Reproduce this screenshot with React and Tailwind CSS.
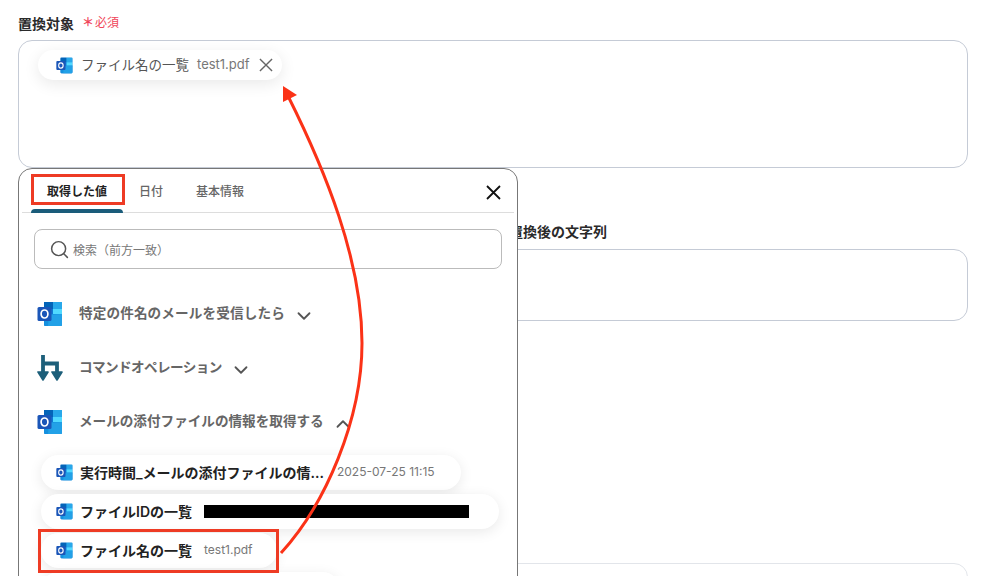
import React from "react";
import { ChevronDown, ChevronUp, Search } from "lucide-react";

const font = "font-['Inter','Noto_Sans_CJK_JP',sans-serif]";

const OutlookIcon = ({ className }) => (
  <svg viewBox="0 0 26 26" className={className}>
    <rect x="7" y="1" width="18" height="24" rx="1.5" fill="#0f78d4" />
    <rect x="7" y="1" width="9" height="7" fill="#0364b8" />
    <rect x="16" y="1" width="9" height="7" fill="#28a8ea" />
    <rect x="7" y="8" width="9" height="7" fill="#0f78d4" />
    <rect x="16" y="8" width="9" height="7" fill="#50d9ff" />
    <path d="M8 13 L25 13 L25 23.5 A1.5 1.5 0 0 1 23.5 25 L8.5 25 A1.5 1.5 0 0 1 7 23.5 L7 13 Z" fill="#1490df" />
    <path d="M12 14 L25 13 L25 23.5 A1.5 1.5 0 0 1 23.5 25 L11 25 Z" fill="#28a8ea" opacity="0.7" />
    <rect x="0.5" y="6" width="14" height="14" rx="1.5" fill="#1b56b8" />
    <ellipse cx="7.5" cy="13" rx="3.4" ry="4" fill="none" stroke="#ffffff" strokeWidth="1.7" />
  </svg>
);

const BranchIcon = ({ className }) => (
  <svg viewBox="0 0 26 26" className={className}>
    <path d="M6 0 V19 M6 8.5 H20 V19" fill="none" stroke="#1d5f7a" strokeWidth="3.8" />
    <path
      d="M1 17 H11 L6 25 Z M15 17 H25 L20 25 Z"
      fill="#1d5f7a"
      stroke="#1d5f7a"
      strokeWidth="1.6"
      strokeLinejoin="round"
    />
  </svg>
);

const CloseIcon = ({ className, strokeWidth }) => (
  <svg viewBox="0 0 15 15" className={className}>
    <path d="M1 1 L14 14 M14 1 L1 14" fill="none" stroke="currentColor" strokeWidth={strokeWidth} />
  </svg>
);

const Section = ({ icon, label, tracking = "", open }) => (
  <div className="flex h-[54px] items-center pl-[18px]">
    {icon}
    <span className={`ml-[16px] pb-[2px] text-[13.6px] font-semibold text-[#666666] ${tracking}`}>{label}</span>
    {open ? (
      <ChevronUp className="ml-[8px] mt-[3px] h-[22px] w-[22px] text-[#555555]" strokeWidth={2} />
    ) : (
      <ChevronDown className="ml-[8px] mt-[3px] h-[22px] w-[22px] text-[#555555]" strokeWidth={2} />
    )}
  </div>
);

const ValuePill = ({ label, width, children }) => (
  <div
    className={`flex ${width} h-[35px] items-center rounded-full bg-white pb-[1px] pl-[15px] shadow-[0_3px_14px_rgba(0,0,0,0.09)]`}
  >
    <OutlookIcon className="h-[17px] w-[17px] shrink-0" />
    <span className="ml-[7px] shrink-0 text-[14px] font-semibold text-[#222222]">{label}</span>
    {children}
  </div>
);

export default function App() {
  return (
    <div className={`relative h-[576px] w-[982px] overflow-hidden bg-white ${font}`}>
      {/* form behind the popup */}
      <div className="flex flex-col pl-[18px] pt-[14px]">
        <div className="flex h-[18px] items-center text-[14px] font-semibold text-[#2a2a2a]">
          置換対象
          <span className="ml-[8px] flex items-center text-[12px] font-normal text-[#f0465a]">
            <span className="font-bold">＊</span>
            <span className="ml-[1px]">必須</span>
          </span>
        </div>
        <div className="mt-[8px] h-[128px] w-[950px] rounded-[14px] border border-[#c5cbd6] pl-[19px] pt-[9px]">
          <div className="flex h-[30px] w-[244px] items-center rounded-full bg-white pl-[18px] shadow-[0_4px_16px_rgba(0,0,0,0.09)]">
            <OutlookIcon className="h-[17px] w-[17px] shrink-0" />
            <span className="ml-[8px] text-[13.5px] text-[#555555]">ファイル名の一覧</span>
            <span className="ml-[8px] text-[13px] text-[#777777]">test1.pdf</span>
            <CloseIcon className="ml-[9px] h-[14px] w-[14px] text-[#666666]" strokeWidth={1.5} />
          </div>
        </div>
        <div className="ml-[491px] mt-[54px] flex h-[18px] items-center text-[14px] font-semibold text-[#2a2a2a]">
          置換後の文字列
        </div>
        <div className="mt-[9px] h-[72px] w-[950px] rounded-[14px] border border-[#c5cbd6]" />
        <div className="mt-[242px] h-[72px] w-[950px] rounded-[14px] border border-[#e2e5ea]" />
      </div>

      {/* value picker popup */}
      <div className="absolute left-[18px] top-[168px] h-[440px] w-[500px] rounded-t-[14px] border border-[#777777] bg-white">
        <div className="relative mx-[3px] flex h-[44px] w-[492px] items-center border-b border-[#dddddd] pl-[9px] pt-[2px]">
          <div className="flex w-[92px] justify-center text-[12px] font-semibold text-[#222222]">
            取得した値
            <div className="absolute bottom-[-1px] left-[9px] h-[4px] w-[92px] rounded-t-[4px] bg-[#1a5c7a]" />
          </div>
          <span className="ml-[16px] text-[12px] font-medium text-[#666666]">日付</span>
          <span className="ml-[33px] text-[12px] font-medium text-[#666666]">基本情報</span>
          <CloseIcon className="absolute right-[13px] top-[16px] h-[15px] w-[15px] text-[#111111]" strokeWidth={1.8} />
        </div>
        <div className="mx-[15px] mt-[16px] flex h-[40px] w-[468px] items-center rounded-[8px] border border-[#bbbbbb] pl-[14px]">
          <Search className="h-[21px] w-[21px] text-[#555555]" strokeWidth={1.7} />
          <span className="ml-[3px] pt-[3px] text-[12px] text-[#777777]">検索（前方一致）</span>
        </div>
        <div className="mt-[18px] flex flex-col">
          <Section
            icon={<OutlookIcon className="h-[26px] w-[26px] shrink-0" />}
            label="特定の件名のメールを受信したら"
            tracking="tracking-[0.13px]"
          />
          <Section
            icon={<BranchIcon className="h-[26px] w-[26px] shrink-0" />}
            label="コマンドオペレーション"
            tracking="tracking-[-0.6px]"
          />
          <Section icon={<OutlookIcon className="h-[26px] w-[26px] shrink-0" />} label="メールの添付ファイルの情報を取得する" open />
        </div>
        <div className="ml-[22px] mt-[6px] flex flex-col gap-[4px]">
          <ValuePill label="実行時間_メールの添付ファイルの情..." width="w-[420px]">
            <span className="ml-[13px] whitespace-nowrap text-[12px] text-[#777777]">2025-07-25 11:15</span>
          </ValuePill>
          <ValuePill label="ファイルIDの一覧" width="w-[458px]">
            <div className="ml-[12px] mt-[1px] h-[13px] w-[265px] bg-black" />
          </ValuePill>
          <ValuePill label="ファイル名の一覧" width="w-[236px]">
            <span className="ml-[12px] text-[12px] text-[#777777]">test1.pdf</span>
          </ValuePill>
          <div className="h-[35px] w-[299px] rounded-full bg-white shadow-[0_3px_14px_rgba(0,0,0,0.09)]" />
        </div>
      </div>

      {/* red annotations */}
      <div className="absolute left-[31px] top-[174px] h-[31px] w-[94px] border-[3px] border-[#ee3b24]" />
      <div className="absolute left-[38px] top-[529px] h-[44px] w-[241px] border-[3px] border-[#ee3b24]" />
      <svg viewBox="0 0 982 576" className="pointer-events-none absolute left-0 top-0 h-[576px] w-[982px]">
        <path
          d="M281 553 C325 505 362 420 362 343 C362 260 325 170 288 96"
          fill="none"
          stroke="#fb3217"
          strokeWidth="3"
        />
        <path d="M283 86 L283 102 L297 95 Z" fill="#fb3217" />
      </svg>
    </div>
  );
}
